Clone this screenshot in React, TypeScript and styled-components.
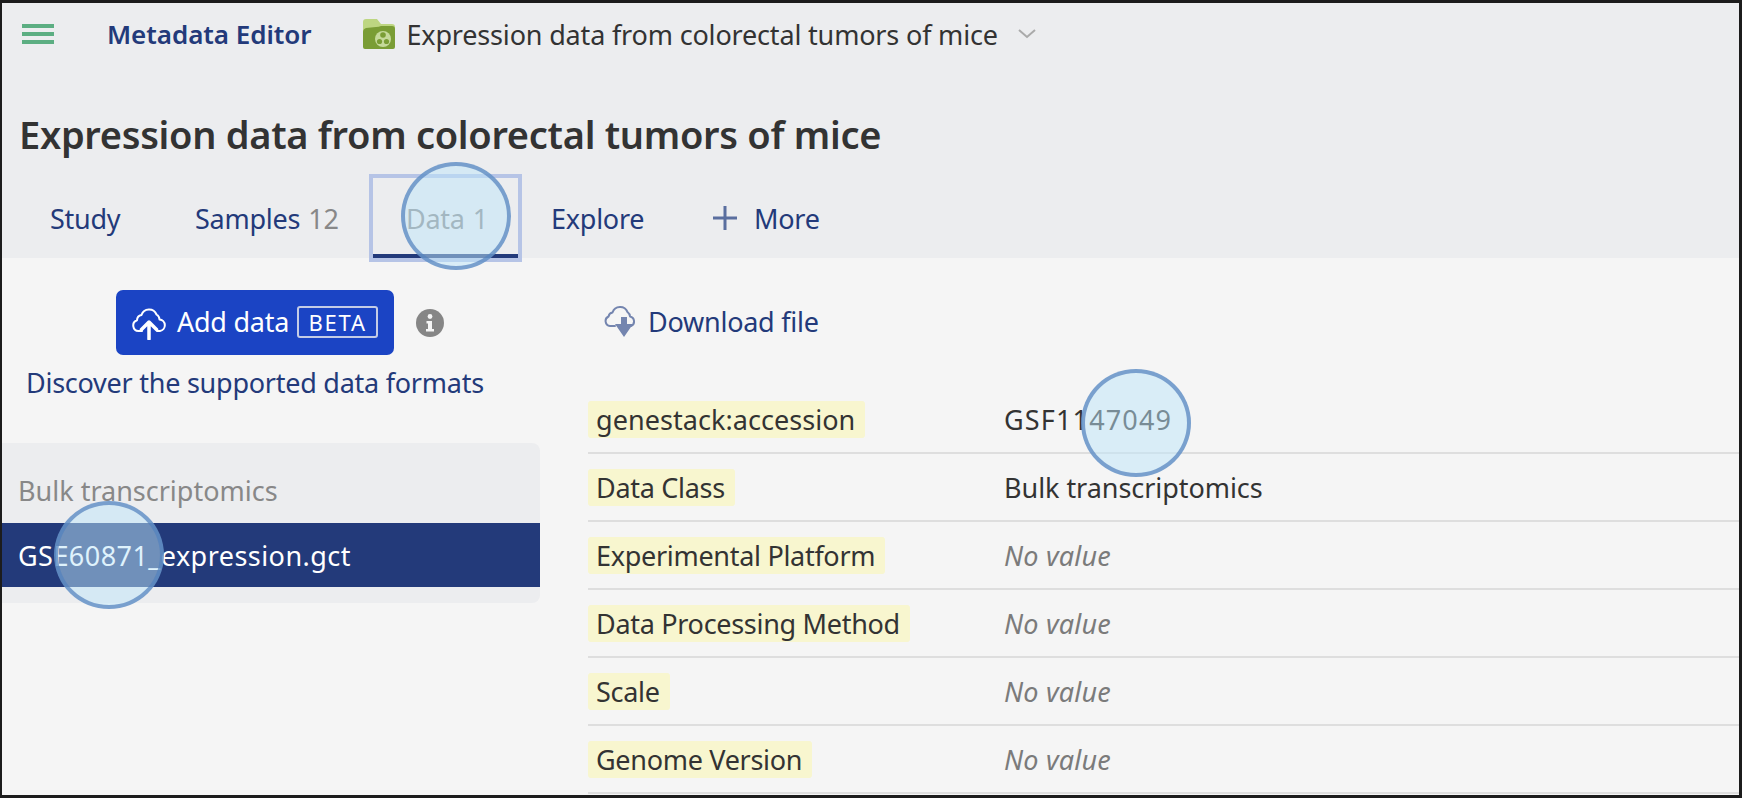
import React from "react";
import styled, { createGlobalStyle } from "styled-components";

const GlobalStyle = createGlobalStyle`
  html, body { margin: 0; padding: 0; background: #f5f5f5; }
  * { box-sizing: border-box; }
`;

const navy = "#233a7a";
const sans = `"Noto Sans", Roboto, sans-serif`;

const Frame = styled.div`
  width: 1742px;
  height: 798px;
  border: 3px solid #1c1c1c;
  border-left-width: 2px;
  background: #f5f5f5;
  overflow: hidden;
  font-family: ${sans};
  font-size: 27px;
  letter-spacing: -0.25px;
  color: #333;
`;

const Header = styled.header`
  height: 255px;
  background: #ecedef;
  display: flex;
  flex-direction: column;
`;

const TopBar = styled.div`
  display: flex;
  align-items: center;
  height: 62px;
  padding-left: 20px;
`;

const Menu = styled.svg`
  width: 32px;
  height: 20px;
  margin-right: 53px;
`;

const AppName = styled.span`
  font-weight: 600;
  color: ${navy};
  font-size: 26px;
  letter-spacing: -0.05px;
  margin-right: 52px;
`;

const Folder = styled.svg`
  width: 32px;
  height: 30px;
  margin-right: 11px;
`;

const Crumb = styled.span`
  letter-spacing: -0.17px;
  color: #333;
`;

const Caret = styled.svg`
  width: 18px;
  height: 10px;
  margin-left: 20px;
`;

const Title = styled.h1`
  margin: 44px 0 0 17px;
  font-size: 38px;
  line-height: 50px;
  font-weight: 600;
  letter-spacing: -0.3px;
  color: #333;
`;

const Tabs = styled.nav`
  display: flex;
  margin: 19px 0 0 15px;
`;

const Tab = styled.div<{ $w: number; $active?: boolean }>`
  position: relative;
  width: ${(p) => p.$w}px;
  height: 80px;
  padding: 0 0 0 33px;
  display: flex;
  align-items: center;
  white-space: nowrap;
  color: ${navy};
  ${(p) =>
    p.$active &&
    `
    color: #888;
    border-bottom: 4px solid ${navy};
    padding-top: 4px;
    &::after {
      content: "";
      position: absolute;
      inset: -4px -4px -8px -4px;
      border: 4px solid #b6c4e6;
    }
  `}
`;

const Count = styled.span`
  color: #888;
  margin-left: 8px;
`;

const PlusIcon = styled.svg`
  width: 26px;
  height: 26px;
  margin-right: 16px;
`;

const Body = styled.main`
  display: flex;
  height: 537px;
`;

const Sidebar = styled.aside`
  width: 538px;
  flex: none;
  padding-top: 32px;
`;

const ButtonRow = styled.div`
  display: flex;
  align-items: center;
  margin-left: 114px;
  gap: 22px;
`;

const AddButton = styled.button`
  width: 278px;
  height: 65px;
  padding: 0 0 2px 16px;
  border: none;
  border-radius: 7px;
  background: #1b44c4;
  color: #fff;
  font: inherit;
  letter-spacing: -0.25px;
  display: flex;
  align-items: center;
  white-space: nowrap;
`;

const UploadIcon = styled.svg`
  width: 34px;
  height: 34px;
  margin-right: 11px;
  margin-top: 2px;
`;

const Beta = styled.span`
  margin-left: 8px;
  width: 81px;
  height: 32px;
  border: 2px solid #c4cce6;
  border-radius: 3px;
  font-size: 22px;
  letter-spacing: 1.8px;
  display: flex;
  align-items: center;
  justify-content: center;
`;

const InfoIcon = styled.svg`
  width: 28px;
  height: 28px;
`;

const FormatsLink = styled.div`
  margin: 11px 0 0 24px;
  line-height: 34px;
  color: ${navy};
  white-space: nowrap;
`;

const FilePanel = styled.section`
  margin-top: 43px;
  height: 160px;
  background: #ecedef;
  border-radius: 0 8px 8px 0;
`;

const GroupName = styled.div`
  height: 80px;
  padding: 30px 0 0 16px;
  line-height: 36px;
  color: #888;
  letter-spacing: 0;
`;

const FileRow = styled.div`
  position: relative;
  height: 64px;
  background: ${navy};
  color: #fff;
  padding-left: 16px;
  display: flex;
  align-items: center;
  letter-spacing: 0.45px;
`;

const Details = styled.section`
  flex: 1;
  padding: 32px 0 0 48px;
  min-width: 0;
`;

const DownloadLink = styled.div`
  display: flex;
  align-items: center;
  height: 65px;
  padding-bottom: 2px;
  margin-left: 16px;
  color: ${navy};
`;

const DownloadIcon = styled.svg`
  width: 33px;
  height: 33px;
  margin-right: 11px;
`;

const Rows = styled.div`
  margin-top: 31px;
`;

const Row = styled.div`
  height: 68px;
  padding-top: 15px;
  border-bottom: 2px solid #dedede;
  display: grid;
  grid-template-columns: 416px 1fr;
  align-items: start;
`;

const Chip = styled.span<{ $track?: number }>`
  justify-self: start;
  height: 37px;
  line-height: 37px;
  padding: 0 10px 0 8px;
  border-radius: 3px;
  background: #f8f6cf;
  color: #333;
  letter-spacing: ${(p) => p.$track ?? -0.3}px;
  white-space: nowrap;
`;

const Value = styled.span<{ $empty?: boolean; $track?: number }>`
  position: relative;
  line-height: 37px;
  width: fit-content;
  letter-spacing: ${(p) => p.$track ?? (p.$empty ? 0.2 : -0.05)}px;
  color: ${(p) => (p.$empty ? "#7b7b7b" : "#333")};
  font-style: ${(p) => (p.$empty ? "italic" : "normal")};
`;

// touch marker from the screen recording, lies over the text
const Touch = styled.span<{ $left: number; $top: number }>`
  position: absolute;
  left: ${(p) => p.$left}px;
  top: ${(p) => p.$top}px;
  width: 110px;
  height: 108px;
  border-radius: 50%;
  background: rgba(189, 230, 250, 0.5);
  border: 4px solid rgba(85, 130, 190, 0.72);
  pointer-events: none;
  z-index: 2;
`;

const rows = [
  { label: "genestack:accession", value: "GSF1147049", labelTrack: 0.05, valueTrack: 1.15 },
  { label: "Data Class", value: "Bulk transcriptomics" },
  { label: "Experimental Platform" },
  { label: "Data Processing Method" },
  { label: "Scale" },
  { label: "Genome Version" },
];

const App: React.FC = () => {
  return (
    <Frame>
      <GlobalStyle />
      <Header>
        <TopBar>
          <Menu viewBox="0 0 32 20">
            <rect y="0" width="32" height="4" fill="#5cae82" />
            <rect y="8" width="32" height="4" fill="#5cae82" />
            <rect y="16" width="32" height="4" fill="#5cae82" />
          </Menu>
          <AppName>Metadata Editor</AppName>
          <Folder viewBox="0 0 32 30">
            <path d="M0 3a3 3 0 0 1 3-3h11l4 5h11a3 3 0 0 1 3 3v6H0z" fill="#bdd681" />
            <path d="M0 13q0-3 3-4l10-1q3 0 5-1h11q3 0 3 3v18q0 2-2 2H2q-2 0-2-2z" fill="#7a9d35" />
            <circle cx="20" cy="20" r="8" fill="#c5d99a" />
            <circle cx="20" cy="16" r="2.8" fill="#7a9d35" />
            <circle cx="16.5" cy="22.5" r="2.6" fill="#7a9d35" />
            <circle cx="23.5" cy="22.5" r="2.6" fill="#7a9d35" />
          </Folder>
          <Crumb>Expression data from colorectal tumors of mice</Crumb>
          <Caret viewBox="0 0 18 10">
            <path d="M1 1l8 7 8-7" fill="none" stroke="#aaa" strokeWidth="2" />
          </Caret>
        </TopBar>
        <Title>Expression data from colorectal tumors of mice</Title>
        <Tabs>
          <Tab $w={145}>Study</Tab>
          <Tab $w={211}>
            Samples<Count>12</Count>
          </Tab>
          <Tab $w={145} $active>
            Data<Count>1</Count>
            <Touch $left={28} $top={-16} />
          </Tab>
          <Tab $w={161}>Explore</Tab>
          <Tab $w={200}>
            <PlusIcon viewBox="0 0 26 26">
              <path d="M13 1v24M1 13h24" stroke="#5a6f9f" strokeWidth="3" fill="none" />
            </PlusIcon>
            More
          </Tab>
        </Tabs>
      </Header>
      <Body>
        <Sidebar>
          <ButtonRow>
            <AddButton>
              <UploadIcon viewBox="0 0 34 34" fill="none">
                <path
                  d="M10 25H6.500A5.500 5.500 0 0 1 5 14.300A5.500 5.500 0 0 1 9.500 9A8 8 0 0 1 24.500 8.500A6 6 0 0 1 27.500 13.500A5.800 5.800 0 0 1 28 25H25"
                  stroke="#fff"
                  strokeWidth="2"
                  strokeLinecap="round"
                  strokeLinejoin="round"
                />
                <path d="M17 33V17M9.500 23.500L17 16l7.500 7.500" stroke="#fff" strokeWidth="3.500" strokeLinecap="round" strokeLinejoin="round" />
              </UploadIcon>
              Add data
              <Beta>BETA</Beta>
            </AddButton>
            <InfoIcon viewBox="0 0 28 28">
              <circle cx="14" cy="14" r="14" fill="#868686" />
              <circle cx="14" cy="7.500" r="2.400" fill="#f5f5f5" />
              <path d="M10.500 12h5.500v8h2v2.500h-8V20h2v-5.500h-1.500z" fill="#f5f5f5" />
            </InfoIcon>
          </ButtonRow>
          <FormatsLink>Discover the supported data formats</FormatsLink>
          <FilePanel>
            <GroupName>Bulk transcriptomics</GroupName>
            <FileRow>
              GSE60871_expression.gct
              <Touch $left={52} $top={-22} />
            </FileRow>
          </FilePanel>
        </Sidebar>
        <Details>
          <DownloadLink>
            <DownloadIcon viewBox="0 0 33 33" fill="none">
              <path
                d="M11 21H6A5 5 0 0 1 4.500 11.500A5 5 0 0 1 8.500 7.500A8 8 0 0 1 23.500 7A6 6 0 0 1 26 11.500A5 5 0 0 1 27 21"
                stroke="#7485af"
                strokeWidth="2"
                strokeLinecap="round"
                strokeLinejoin="round"
              />
              <path d="M17 12h6v7h6l-9 13l-9-13h6z" fill="#7485af" />
            </DownloadIcon>
            Download file
          </DownloadLink>
          <Rows>
            {rows.map((row, i) => (
              <Row key={row.label}>
                <Chip $track={row.labelTrack}>{row.label}</Chip>
                <Value $empty={!row.value} $track={row.valueTrack}>
                  {row.value ?? "No value"}
                  {i === 0 && <Touch $left={77} $top={-32} />}
                </Value>
              </Row>
            ))}
          </Rows>
        </Details>
      </Body>
    </Frame>
  );
};

export default App;
